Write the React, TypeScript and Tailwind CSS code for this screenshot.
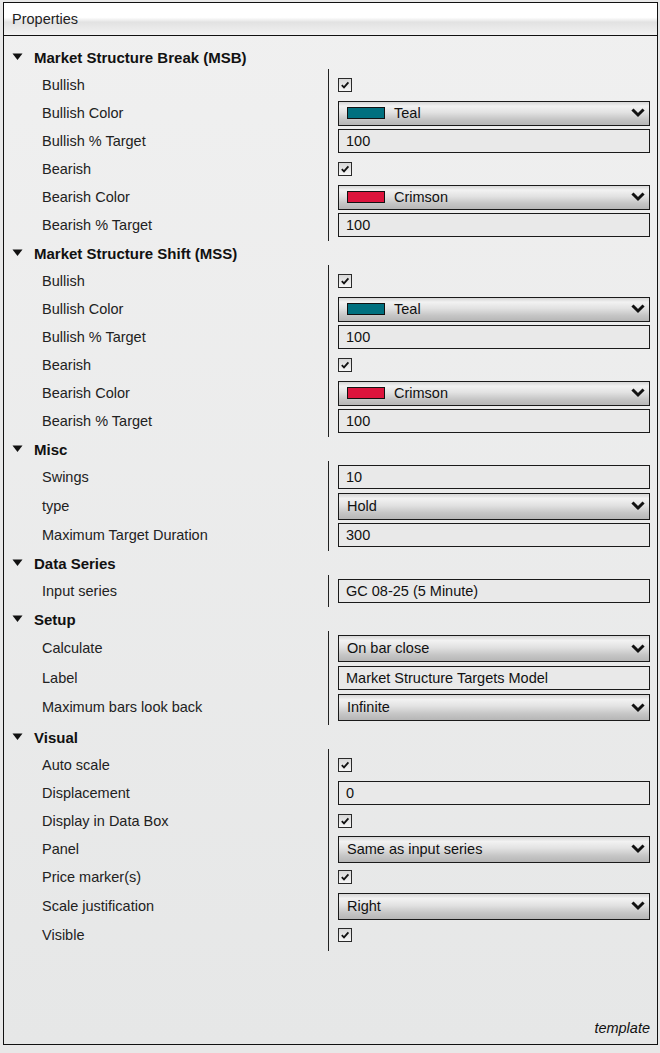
import React from "react";

type Row =
  | { label: string; kind: "check"; h?: number }
  | { label: string; kind: "color"; value: string; color: string; h?: number }
  | { label: string; kind: "input"; value: string; h?: number }
  | { label: string; kind: "select"; value: string; h?: number };

type Section = { title: string; rows: Row[] };

const sections: Section[] = [
  {
    title: "Market Structure Break (MSB)",
    rows: [
      { label: "Bullish", kind: "check" },
      { label: "Bullish Color", kind: "color", value: "Teal", color: "#00707f" },
      { label: "Bullish % Target", kind: "input", value: "100" },
      { label: "Bearish", kind: "check" },
      { label: "Bearish Color", kind: "color", value: "Crimson", color: "#dc143c" },
      { label: "Bearish % Target", kind: "input", value: "100" },
    ],
  },
  {
    title: "Market Structure Shift (MSS)",
    rows: [
      { label: "Bullish", kind: "check" },
      { label: "Bullish Color", kind: "color", value: "Teal", color: "#00707f" },
      { label: "Bullish % Target", kind: "input", value: "100" },
      { label: "Bearish", kind: "check" },
      { label: "Bearish Color", kind: "color", value: "Crimson", color: "#dc143c" },
      { label: "Bearish % Target", kind: "input", value: "100" },
    ],
  },
  {
    title: "Misc",
    rows: [
      { label: "Swings", kind: "input", value: "10" },
      { label: "type", kind: "select", value: "Hold", h: 30 },
      { label: "Maximum Target Duration", kind: "input", value: "300" },
    ],
  },
  {
    title: "Data Series",
    rows: [{ label: "Input series", kind: "input", value: "GC 08-25 (5 Minute)" }],
  },
  {
    title: "Setup",
    rows: [
      { label: "Calculate", kind: "select", value: "On bar close", h: 31 },
      { label: "Label", kind: "input", value: "Market Structure Targets Model" },
      { label: "Maximum bars look back", kind: "select", value: "Infinite", h: 31 },
    ],
  },
  {
    title: "Visual",
    rows: [
      { label: "Auto scale", kind: "check" },
      { label: "Displacement", kind: "input", value: "0" },
      { label: "Display in Data Box", kind: "check" },
      { label: "Panel", kind: "select", value: "Same as input series", h: 28 },
      { label: "Price marker(s)", kind: "check" },
      { label: "Scale justification", kind: "select", value: "Right", h: 30 },
      { label: "Visible", kind: "check" },
    ],
  },
];

function Chevron() {
  return (
    <svg width="14" height="10" viewBox="0 0 14 10" className="shrink-0">
      <path d="M2.5 2.5 L7 7 L11.5 2.5" fill="none" stroke="#111" strokeWidth="3" strokeLinecap="square" strokeLinejoin="miter" />
    </svg>
  );
}

function Checkbox() {
  return (
    <div className="w-[14px] h-[14px] border border-[#2a2a2a] bg-[linear-gradient(to_bottom,#d8d8d8,#f6f6f6)] flex items-center justify-center">
      <svg width="10" height="10" viewBox="0 0 10 10">
        <path d="M1.8 5.2 L4 7.4 L8.4 2.4" fill="none" stroke="#111" strokeWidth="1.8" />
      </svg>
    </div>
  );
}

function SelectBox({ children, h }: { children: React.ReactNode; h: string }) {
  return (
    <div
      className={`${h} w-full border border-[#1a1a1a] bg-[linear-gradient(to_bottom,#d6d6d6_0%,#f2f2f2_18%,#e2e2e2_45%,#c6c6c6_75%,#b6b6b6_100%)] flex items-center pl-[8px] pr-[4px]`}
    >
      <div className="flex-1 flex items-center">{children}</div>
      <Chevron />
    </div>
  );
}

function Value({ row }: { row: Row }) {
  if (row.kind === "check") return <Checkbox />;
  if (row.kind === "input")
    return (
      <div className="h-[24px] w-full border border-[#1a1a1a] bg-[#e9e9e9] flex items-center pl-[7px] text-[#111]">
        {row.value}
      </div>
    );
  if (row.kind === "color")
    return (
      <SelectBox h="h-[25px]">
        <div className="w-[38px] h-[12px] border border-[#111]" style={{ backgroundColor: row.color }} />
        <span className="ml-[9px] text-[#111]">{row.value}</span>
      </SelectBox>
    );
  return (
    <SelectBox h="h-[27px]">
      <span className="text-[#111]">{row.value}</span>
    </SelectBox>
  );
}

function SectionView({ s }: { s: Section }) {
  return (
    <div>
      <div className="h-[24px] flex items-center pl-[8px]">
        <svg width="11" height="8" viewBox="0 0 11 8" className="shrink-0">
          <path d="M0.5 0.5 L10.5 0.5 L5.5 7 Z" fill="#111" />
        </svg>
        <span className="ml-[11px] font-bold text-[15px] text-[#111]">{s.title}</span>
      </div>
      <div className="flex">
        <div className="w-[324px] py-[2px] flex flex-col">
          {s.rows.map((r, i) => (
            <div key={i} className="flex items-center pl-[38px] text-[#222]" style={{ height: r.h ?? 28 }}>
              {r.label}
            </div>
          ))}
        </div>
        <div className="flex-1 border-l border-[#222] py-[2px] pl-[9px] pr-[7px] flex flex-col">
          {s.rows.map((r, i) => (
            <div key={i} className="flex items-center" style={{ height: r.h ?? 28 }}>
              <Value row={r} />
            </div>
          ))}
        </div>
      </div>
    </div>
  );
}

export default function App() {
  return (
    <div
      className="w-[660px] h-[1053px] bg-[#e8e8e8] pl-[3px] pt-[2px] text-[14.5px] leading-none"
      style={{ fontFamily: '"Liberation Sans", Arial, sans-serif' }}
    >
      <div className="w-[655px] h-[1043px] border border-[#111] flex flex-col bg-[linear-gradient(to_bottom,#f0f0f0,#e6e7e7)]">
        <div className="h-[33px] shrink-0 border-b border-[#111] bg-[linear-gradient(to_bottom,#ffffff_0%,#ffffff_45%,#e2e2e2_60%,#ececec_85%,#f2f2f2_100%)] flex items-center pl-[8px] text-[#222]">
          Properties
        </div>
        <div className="flex-1 pt-[9px]">
          {sections.map((s, i) => (
            <SectionView key={i} s={s} />
          ))}
        </div>
        <div className="text-right pr-[7px] pb-[9px] italic text-[#111]">template</div>
      </div>
    </div>
  );
}
